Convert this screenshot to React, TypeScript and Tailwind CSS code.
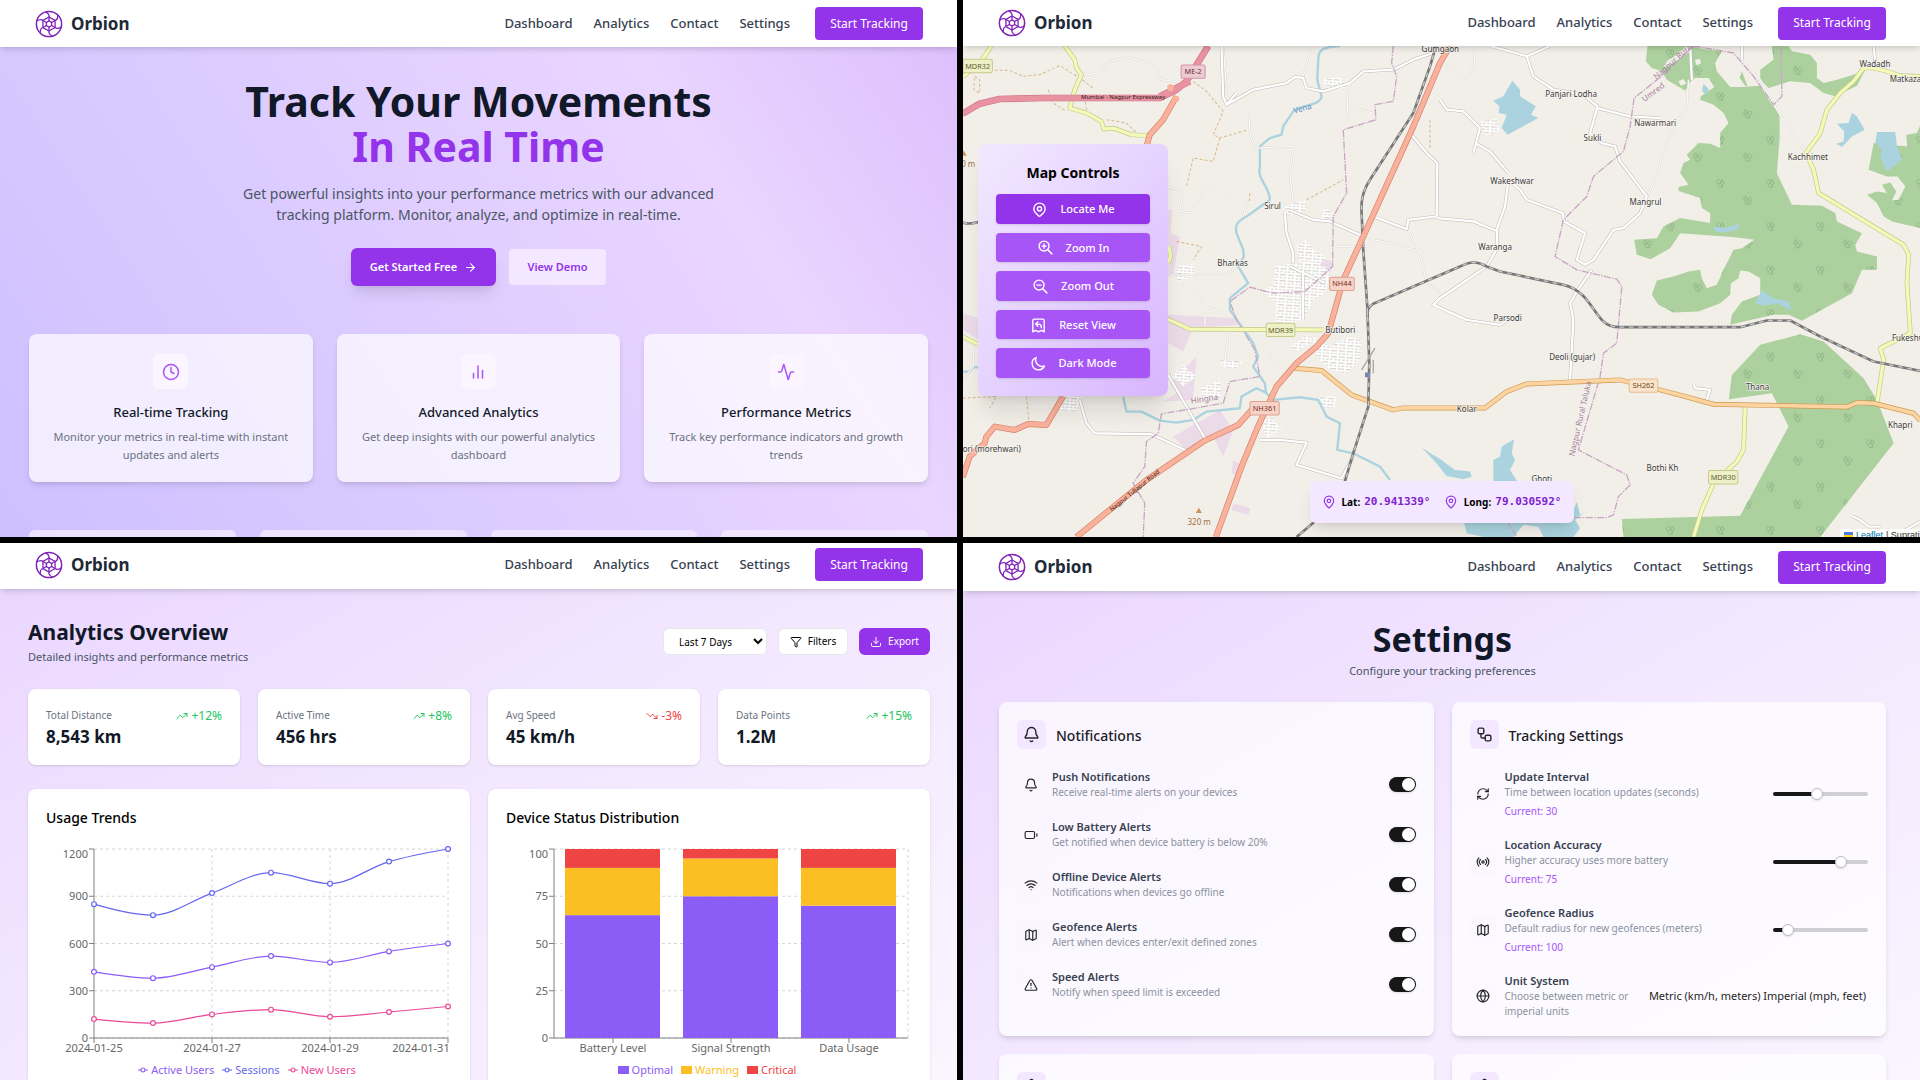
import React from "react";
import type { ReactNode } from "react";
import {
  Activity,
  ArrowRight,
  Battery,
  Bell,
  Clock,
  Download,
  Filter,
  Globe,
  Map as MapIcon,
  MapPin,
  Radio,
  RefreshCw,
  Settings as Gear,
  Shield,
  TrendingDown,
  TrendingUp,
  TriangleAlert,
  Wifi,
  Workflow,
} from "lucide-react";
import { FiBarChart2 } from "react-icons/fi";
import {
  HiOutlineLocationMarker,
  HiOutlineMoon,
  HiOutlineReceiptRefund,
  HiOutlineZoomIn,
  HiOutlineZoomOut,
} from "react-icons/hi";

/* ---------- Shared header ---------- */

function polar(r: number, deg: number): string {
  const a = (deg * Math.PI) / 180;
  return `${(14 + r * Math.cos(a)).toFixed(2)} ${(14 + r * Math.sin(a)).toFixed(2)}`;
}

function Logo() {
  const angles = [0, 60, 120, 180, 240, 300];
  const hex = (r: number) => "M" + angles.map((a) => polar(r, a + 30)).join("L") + "Z";
  return (
    <svg viewBox="0 0 28 28" className="size-[28px]" fill="none" stroke="#7e22b8" aria-hidden="true">
      <circle cx="14" cy="14" r="12.6" strokeWidth="1.5" />
      <path d={hex(7)} strokeWidth="1.3" />
      <path d={hex(3)} strokeWidth="1.3" />
      {angles.map((a) => (
        <g key={a} strokeWidth="1.3">
          <path d={`M${polar(3, a + 30)}L${polar(7, a + 30)}`} />
          <path d={`M${polar(7, a + 30)}Q${polar(10, a + 34)} ${polar(12.6, a + 14)}`} />
        </g>
      ))}
    </svg>
  );
}

function Header({ className }: { className: string }) {
  return (
    <header
      className={`relative z-10 flex shrink-0 items-center justify-between bg-white pl-[35px] pr-[34px] shadow-md ${className}`}
    >
      <a href="#home" className="flex items-center gap-2 text-[17px] font-bold text-[#1f2937]">
        <Logo />
        Orbion
      </a>
      <nav className="flex items-center gap-[21px] text-[13px] font-medium text-[#374151]">
        <a href="#dashboard">Dashboard</a>
        <a href="#analytics">Analytics</a>
        <a href="#contact">Contact</a>
        <a href="#settings">Settings</a>
        <button type="button" className="ml-1 h-[33px] w-[108px] rounded bg-[#9333ea] text-[12px] font-normal text-white">
          Start Tracking
        </button>
      </nav>
    </header>
  );
}

/* ---------- Landing ---------- */

const features: { icon: ReactNode; title: string; text: string }[] = [
  { icon: <Clock size={18} />, title: "Real-time Tracking", text: "Monitor your metrics in real-time with instant updates and alerts" },
  { icon: <FiBarChart2 size={18} />, title: "Advanced Analytics", text: "Get deep insights with our powerful analytics dashboard" },
  { icon: <Activity size={18} />, title: "Performance Metrics", text: "Track key performance indicators and growth trends" },
];

function Landing() {
  return (
    <section className="flex min-h-0 flex-col overflow-hidden bg-[linear-gradient(57deg,#cdc0ff_0%,#dccbff_38%,#e9d5ff_73%,#dcbdfd_100%)]">
      <Header className="h-[47px]" />
      <div className="flex flex-col items-center px-[29px] pt-8 text-center">
        <h1 className="text-[41px] font-bold leading-[45px] text-[#111827]">
          Track Your Movements
          <span className="block text-[#9333ea]">In Real Time</span>
        </h1>
        <p className="mt-[14px] max-w-[490px] text-[14px] leading-[21px] text-[#4b5563]">
          Get powerful insights into your performance metrics with our advanced tracking platform. Monitor, analyze, and
          optimize in real-time.
        </p>
        <div className="mt-[23px] flex items-center gap-[13px] text-[11px] font-semibold">
          <button
            type="button"
            className="flex h-[38px] w-[145px] items-center justify-center gap-[7px] rounded-md bg-[#9333ea] text-white shadow-lg"
          >
            Get Started Free
            <ArrowRight size={13} />
          </button>
          <button type="button" className="h-[36px] w-[97px] rounded bg-[#f3e8ff] text-[#9333ea]">
            View Demo
          </button>
        </div>
        <div className="mt-[48px] grid w-full grid-cols-3 gap-6">
          {features.map((f) => (
            <article key={f.title} className="flex flex-col items-center rounded-lg bg-white/70 px-4 pb-[18px] pt-5 shadow-md">
              <div className="flex size-[35px] items-center justify-center rounded-md bg-[#faf5ff] text-[#a855f7]">{f.icon}</div>
              <h2 className="mt-[14px] text-[13px] font-medium leading-[18px] text-[#111827]">{f.title}</h2>
              <p className="mt-[7px] text-[11px] leading-[18px] text-[#6b7280]">{f.text}</p>
            </article>
          ))}
        </div>
        <div className="mt-[48px] grid w-full grid-cols-4 gap-6">
          {[0, 1, 2, 3].map((i) => (
            <div key={i} className="h-24 rounded-md bg-[#f3e8ff]/80" />
          ))}
        </div>
      </div>
    </section>
  );
}

/* ---------- Map ---------- */

const forests = [
  "M2062 139 2057 185 2075 205 2105 215 2120 240 2175 273 2192 245 2205 235 2245 235 2262 262 2222 290 2220 300 2260 315 2290 340 2305 370 2280 400 2280 445 2250 432 2215 430 2180 465 2190 480 2170 490 2160 520 2185 555 2155 562 2155 574 2220 595 2225 625 2250 640 2250 670 2160 655 2110 680 2090 715 2022 720 2030 765 2072 778 2130 745 2160 700 2325 712 2382 720 2345 745 2320 750 2290 810 2270 855 2240 865 2225 835 2220 810 2185 815 2140 830 2090 842 2075 885 2095 915 2140 938 2215 935 2280 910 2310 885 2312 850 2335 835 2340 812 2365 815 2400 835 2400 885 2345 905 2315 945 2310 975 2440 945 2485 945 2525 963 2675 880 2705 810 2750 810 2750 770 2690 755 2685 735 2705 700 2630 665 2625 640 2585 618 2495 615 2450 520 2458 420 2458 345 2425 300 2400 258 2345 262 2310 262 2270 215 2265 190 2285 155 2230 148 2190 139Z",
  "M2435 139 2440 180 2400 210 2400 240 2425 265 2490 245 2550 250 2590 280 2625 290 2690 258 2715 210 2680 225 2630 240 2590 250 2570 235 2570 190 2550 165 2495 155 2485 139Z",
  "M2880 375 2870 400 2838 405 2840 440 2740 430 2725 510 2780 530 2812 530 2835 560 2815 600 2795 602 2808 575 2790 548 2765 555 2780 580 2750 575 2720 585 2750 610 2770 650 2795 665 2880 685Z",
  "M2345 215 2338 235 2355 258 2362 260Z",
  "M2520 1003 2400 1035 2315 1125 2306 1198 2435 1180 2485 1280 2340 1547 1985 1557 1990 1611 2580 1611 2800 1330 2750 1200 2710 1135 2590 1025Z",
];

const clearings = [
  "M2180 139 2150 165 2120 185 2110 205 2130 195 2160 175 2190 155Z",
  "M2205 180 2220 178 2222 192 2208 196Z",
  "M2155 245 2170 238 2178 252 2162 258Z",
];

const waters = [
  "M1657 243 1640 272 1630 290 1600 303 1618 320 1616 340 1640 345 1625 385 1643 405 1735 355 1713 345 1727 320 1680 290 1680 270Z",
  "M2230 253 2246 268 2238 283 2225 275Z",
  "M2675 340 2690 350 2713 390 2675 410 2645 442 2628 432 2650 425 2652 395 2630 372 2665 370Z",
  "M2750 397 2805 397 2810 440 2825 480 2780 515 2760 475 2765 450 2745 430Z",
  "M2385 910 2405 872 2440 895 2485 905 2493 932 2450 910 2410 918Z",
  "M2260 680 2300 685 2340 670 2330 690 2290 698 2265 694Z",
  "M1385 1343 1415 1362 1440 1377 1485 1410 1530 1415 1535 1430 1510 1438 1460 1428 1425 1385Z",
  "M1600 1380 1620 1370 1625 1340 1662 1318 1655 1360 1665 1380 1650 1410 1675 1450 1600 1450Z",
  "M1510 1560 1830 1560 1850 1505 1860 1545 1875 1535 1845 1560 1860 1585 1840 1611 1750 1611 1735 1580 1690 1575 1660 1611 1570 1611 1520 1600Z",
];

const zones = [
  "M625 945 830 955 840 975 700 985 670 1055 625 1030Z",
  "M630 1150 710 1070 700 1200 610 1205 650 1180Z",
  "M640 1310 780 1230 820 1290 790 1370 760 1310 680 1350Z",
  "M820 1380 845 1395 835 1430 815 1420Z",
  "M820 1510 872 1525 865 1545 815 1530Z",
  "M625 630 638 630 632 700 660 710 640 830 625 830Z",
  "M1078 775 1118 785 1112 815 1080 812Z",
  "M9 940 56 955 56 1020 9 990Z",
];

const minorRoads = [
  "M2 1150 40 1100 45 1020 M625 563 670 572 660 635 695 640 740 560 860 610 850 650",
  "M365 228 420 220 450 185 510 172 590 200 600 240 690 250",
  "M780 320 800 270 790 139 M867 335 870 400 885 445 1000 440 990 520 1000 610",
  "M1055 139 1030 230 M1165 250 1162 350 M1165 320 1240 340",
  "M630 1120 640 1060 M735 940 735 980 M630 825 800 825 830 800",
  "M700 870 740 920 790 940 M805 1000 795 1080 M925 1060 960 1100",
  "M1350 700 1360 730 1380 760 1400 850 1440 880 M1130 740 1230 740 1250 720 1400 760",
  "M2300 139 2400 240 2450 330 2495 400 2540 460 M1540 139 1545 190 1515 245 1450 190",
  "M2185 240 2180 320 2150 370 2110 450 2090 530 2060 590",
];

const whiteRoads = [
  "M360 1200 380 1270 405 1300 575 1303 680 1352",
  "M625 1125 735 1315",
  "M800 315 880 270 980 250 1005 232 1030 235 1040 265 1090 275 1170 250 1210 215 1300 210 1360 180 1420 160",
  "M785 139 790 290 800 315 830 280",
  "M985 630 1060 660 1110 665 1215 712 M975 640 980 700 1000 760 1000 790",
  "M1030 810 1030 960 M990 800 1095 850",
  "M1350 400 1400 460 1432 490 1430 650 1345 660 1340 688 1240 650",
  "M1430 655 1540 665 1613 695 M1645 540 1635 620 1610 690 1612 745 1580 800 1440 895 1420 915 1520 960 1620 975 1650 955",
  "M1440 300 1460 330 1510 335 1560 385 1540 460 M1545 430 1590 455 1645 520",
  "M1645 540 1680 570 1700 600 1808 640 1812 665 1875 700 1850 780 1875 795 1900 780 1960 690 1990 685 2040 640 2060 590 1980 485 1965 440 1925 430 1890 400 1912 320 1870 285 1780 270 1720 230 1700 170 1770 139",
  "M1912 325 2010 350 2100 355 M1590 139 1650 155 1700 170",
  "M2190 139 2195 240 M2345 139 2345 180 M2740 139 2745 190",
  "M1895 810 1850 875 1830 910 1840 960 1830 1140",
  "M900 1320 960 1320 1040 1328 1010 1395 1060 1410 1145 1435 1180 1370",
  "M2200 1150 2205 1165 2250 1170 2240 1200 M2675 1548 2700 1560 2725 1580 2760 1580 M2835 1590 2880 1565",
];

const yellowRoads = [
  "M95 139 60 190 9 232",
  "M315 139 345 180 350 205 365 225 345 270 330 325 380 340 425 365 432 388 460 385 515 405 570 408",
  "M600 950 640 965 690 988 1090 990",
  "M9 1010 56 1034",
  "M625 790 632 770 628 740",
  "M2880 230 2820 228 2780 215 2740 205 2710 205 2680 245 2640 280 2600 330 2580 400 2537 460 2560 510 2575 580 2830 735 2845 765 2840 850 2850 1000 2760 1045 2770 1080 2750 1210",
  "M2355 1218 2350 1350 2330 1385 2260 1450 2225 1530 2200 1611",
];

const orangeRoad =
  "M1005 1105 1085 1112 1175 1185 1300 1230 1330 1224 1575 1224 1640 1175 1700 1152 1980 1140 2120 1175 2260 1213 2660 1221 2690 1208 2740 1210 2860 1240 2880 1262";

const trunkRoads = [
  "M1470 139 1440 190 1360 380 1210 710 1150 840 1105 1000 1070 1040 1010 1090 950 1160 915 1235 890 1290 845 1400 805 1510 768 1611",
  "M940 1235 880 1225 835 1275 735 1322 560 1440 350 1611",
  "M650 290 610 360 570 405 560 440",
  "M9 1432 30 1370 75 1330 80 1310 105 1280 165 1290 205 1272 260 1275 310 1190",
];

const expressway = "M9 342 60 312 120 298 250 295 600 295 650 270 680 245 745 139 M600 290 690 245";

const rivers = [
  "M1140 139C1090 141 1075 150 1075 180L1072 240 1085 290C1080 320 1020 315 1000 335L970 380 965 405 930 415 900 440 900 500C890 540 930 560 930 600L860 650C830 665 825 680 830 700L850 750 852 770 835 800 865 850 810 895 810 930 880 1030 895 1070 880 1100 915 1150 918 1178 940 1200 1020 1192 1075 1200 1100 1250 1140 1270 1132 1350 1180 1360 1260 1400 1290 1440",
  "M918 1178 890 1165 845 1190 840 1225 740 1235 700 1260 650 1268 600 1262 545 1235 500 1235 490 1190",
  "M9 1115 30 1115 40 1102 56 1102",
];

const boundaries = [
  "M1300 139 1295 190 1310 230 1300 305 1245 315 1248 360 1150 390 1160 580 1120 650 1118 800 1035 875 940 880 870 862 810 905 830 960 885 1050 900 1130 810 1145 790 1210 605 1242 595 1300 560 1325 555 1400 520 1450 555 1510 550 1611",
  "M2200 139 2110 225 2022 295 2010 380 1990 455 1900 530 1880 590 1810 660 1785 770 1850 810 1970 838 1985 860 1970 1030 1930 1060 1920 1130 1855 1350 2000 1425 2010 1455 1975 1490 1960 1545 1940 1553 1840 1553",
  "M2200 139 2320 160 2380 230 2440 315 2465 290 2463 139 M1640 1560 1670 1611",
];

const tracks = [
  "M60 212 150 212 190 230 240 225 300 198 360 235 400 265 M265 270 280 310 320 335 M380 330 375 290",
  "M440 360 500 370 530 400 M700 245 740 275 790 335 760 405 780 415 865 390 M780 415 760 485 700 475 680 560",
  "M1040 600 1150 540 M870 580 868 610 M1410 360 1410 450 M45 230 60 240 60 280 42 270Z",
  "M650 725 725 740 700 780 M9 1195 110 1190 90 1225 M200 1190 208 1265",
];

const railways = [
  "M1428 139 1410 200 1360 340 1230 540C1205 580 1203 610 1205 640L1210 750 1222 920 1228 1090 1225 1220 1180 1360 1150 1460 1070 1560 1010 1611",
  "M1222 950C1222 930 1225 920 1240 912L1500 800C1530 785 1550 783 1580 800L1620 815 1810 855C1880 870 1900 940 1930 965 1940 975 1960 982 1980 982L2340 982 2420 962 2490 962 2580 1010 2740 1085 2880 1113",
  "M9 668C30 675 45 670 56 667",
];

const districts = [
  "M1000 790 1095 800 1110 830 1095 880 1060 900 1030 960 950 980 950 910 900 870 940 860 945 800Z",
  "M1060 1010 1110 1040 1170 1010 1205 1025 1200 1080 1160 1120 1110 1110 1070 1070Z",
  "M1010 735 1040 720 1060 750 1100 770 1075 800 1020 800Z",
  "M990 1040 1040 1005 1065 1025 1010 1055Z",
  "M640 1130 670 1095 710 1130 670 1160Z",
  "M650 800 700 790 705 825 650 850Z",
  "M975 620 1035 600 1040 630 985 650Z",
  "M1095 620 1115 640 1105 670 1085 660Z",
  "M900 1250 940 1255 965 1290 920 1315Z",
  "M1080 1190 1130 1190 1125 1225 1090 1225Z",
  "M1090 235 1145 235 1160 265 1100 272Z",
  "M1560 365 1610 358 1618 395 1575 408Z",
  "M780 1080 850 1085 830 1105 785 1100Z",
  "M720 1165 780 1140 785 1190 735 1195Z",
  "M300 1190 370 1190 345 1235 300 1230Z",
];

type Place = { t: string; x: number; y: number; start?: boolean };

const places: Place[] = [
  { t: "Gumgaon", x: 1441, y: 150 },
  { t: "Panjari Lodha", x: 1833, y: 283 },
  { t: "Sukli", x: 1897, y: 415 },
  { t: "Nawarmari", x: 2085, y: 371 },
  { t: "Wakeshwar", x: 1656, y: 544 },
  { t: "Mangrul", x: 2056, y: 607 },
  { t: "Waranga", x: 1605, y: 744 },
  { t: "Kachhimet", x: 2543, y: 472 },
  { t: "Wadadh", x: 2744, y: 195 },
  { t: "Matkazari", x: 2788, y: 240, start: true },
  { t: "Sirul", x: 938, y: 620 },
  { t: "Bharkas", x: 818, y: 792 },
  { t: "Butibori", x: 1141, y: 992 },
  { t: "Parsodi", x: 1643, y: 954 },
  { t: "Deoli (gujar)", x: 1836, y: 1072 },
  { t: "Kolar", x: 1520, y: 1229 },
  { t: "Thana", x: 2392, y: 1163 },
  { t: "Fukeshwar", x: 2795, y: 1016, start: true },
  { t: "Khapri", x: 2820, y: 1275 },
  { t: "Bothi Kh", x: 2107, y: 1406 },
  { t: "Ghoti", x: 1745, y: 1437 },
  { t: "ori (morehwari)", x: 9, y: 1348, start: true },
];

const shields = [
  { t: "MDR32", x: 54, y: 199, w: 88, bg: "#eef0c8", line: "#c6ca8a", ink: "#5e6230" },
  { t: "ME-2", x: 700, y: 216, w: 72, bg: "#eccbd3", line: "#d592a4", ink: "#6f2a3e" },
  { t: "MDR39", x: 962, y: 990, w: 86, bg: "#eef0c8", line: "#c6ca8a", ink: "#5e6230" },
  { t: "NH44", x: 1146, y: 852, w: 74, bg: "#f5d3c8", line: "#e0a08e", ink: "#7a2f20" },
  { t: "NH361", x: 914, y: 1225, w: 88, bg: "#f5d3c8", line: "#e0a08e", ink: "#7a2f20" },
  { t: "SH262", x: 2050, y: 1157, w: 86, bg: "#f9e3cb", line: "#e5bd8e", ink: "#6f4820" },
  { t: "MDR30", x: 2289, y: 1432, w: 88, bg: "#eef0c8", line: "#c6ca8a", ink: "#5e6230" },
];

function Strokes({ paths, color, width, dash }: { paths: string[]; color: string; width: number; dash?: string }) {
  return (
    <g fill="none" stroke={color} strokeWidth={width} strokeDasharray={dash} strokeLinejoin="round">
      {paths.map((d) => (
        <path key={d} d={d} />
      ))}
    </g>
  );
}

function Fills({ paths, fill }: { paths: string[]; fill: string }) {
  return (
    <g fill={fill}>
      {paths.map((d) => (
        <path key={d} d={d} />
      ))}
    </g>
  );
}

function MapCanvas() {
  return (
    <svg
      viewBox="9 139 2871 1472"
      preserveAspectRatio="xMidYMid slice"
      className="absolute inset-0 size-full"
      fontFamily='"Noto Sans", sans-serif'
      role="img"
      aria-label="Street map around Butibori"
    >
      <defs>
        <pattern id="trees" width="150" height="130" patternUnits="userSpaceOnUse">
          <g fill="none" stroke="#86ac80" strokeWidth="2.4">
            <path d="M24 40v-8m0 0a6 6 0 1 1 2 0M36 42v-8l-6-4 6-11 6 11-6 4M27 42h11" />
            <path d="M106 92v-8l-6-4 6-11 6 11-6 4M118 94v-8m0 0a6 6 0 1 1 2 0M107 94h12" />
          </g>
        </pattern>
        <pattern id="streets" width="24" height="18" patternUnits="userSpaceOnUse" patternTransform="rotate(4)">
          <rect width="24" height="18" fill="#d9d5d0" />
          <path d="M0 4H24M0 13H24M5 0V18M17 4V13" fill="none" stroke="#fff" strokeWidth="5" />
        </pattern>
      </defs>
      <rect x="9" y="139" width="2871" height="1472" fill="#f2efe9" />
      <Fills paths={zones} fill="#ebdbe8" />
      <Fills paths={forests} fill="#add19e" />
      <Fills paths={forests} fill="url(#trees)" />
      <Fills paths={clearings} fill="#f2efe9" />
      <Fills paths={waters} fill="#aad3df" />
      <Strokes paths={rivers} color="#aad3df" width={7} />
      <Strokes paths={tracks} color="#d9b98a" width={3} dash="9 6" />
      <Fills paths={districts} fill="url(#streets)" />
      <Strokes paths={minorRoads} color="#d3d0cc" width={6} />
      <Strokes paths={minorRoads} color="#fbfaf8" width={4} />
      <Strokes paths={whiteRoads} color="#bdb9b5" width={10} />
      <Strokes paths={whiteRoads} color="#ffffff" width={7} />
      <Strokes paths={boundaries} color="#c9a6c4" width={4} dash="22 4 4 4" />
      <Strokes paths={yellowRoads} color="#c3c98b" width={14} />
      <Strokes paths={yellowRoads} color="#f5f9b8" width={10} />
      <Strokes paths={[orangeRoad]} color="#cf9a52" width={15} />
      <Strokes paths={[orangeRoad]} color="#fcd4a1" width={11} />
      <Strokes paths={railways} color="#777777" width={8} />
      <Strokes paths={railways} color="#c9c9c9" width={4} dash="14 14" />
      <Strokes paths={trunkRoads} color="#d97f68" width={18} />
      <Strokes paths={trunkRoads} color="#f9b29c" width={14} />
      <Strokes paths={[expressway]} color="#d07488" width={20} />
      <Strokes paths={[expressway]} color="#e892a2" width={16} />
      <g fill="#f9b29c">
        <circle cx="632" cy="264" r="10" />
        <circle cx="648" cy="298" r="10" />
      </g>
      <path d="M1205 1110 1245 1045M1240 1080v40" stroke="#a8a6a4" strokeWidth="4" fill="none" />
      <rect x="1215" y="1118" width="14" height="14" fill="#7a82b8" />
      <g fill="#d08f55">
        <path d="M717 1523l9 16h-18z" />
        <path d="M12 452l9 16h-18z" />
      </g>
      {shields.map((s) => (
        <g key={s.t}>
          <rect x={s.x - s.w / 2} y={s.y - 20} width={s.w} height="40" rx="5" fill={s.bg} stroke={s.line} strokeWidth="3" />
          <text x={s.x} y={s.y + 8} textAnchor="middle" fontSize="22" fill={s.ink}>
            {s.t}
          </text>
        </g>
      ))}
      <g fontSize="24" fill="#3b3a38" stroke="#f7f5f1" strokeWidth="4" paintOrder="stroke" strokeLinejoin="round">
        {places.map((p) => (
          <text key={p.t} x={p.x} y={p.y + 8} textAnchor={p.start ? "start" : "middle"}>
            {p.t}
          </text>
        ))}
      </g>
      <g fontSize="24" textAnchor="middle">
        <g fill="#a57da3">
          <text transform="translate(735 1205) rotate(-9)">Hingna</text>
          <text transform="translate(2084 284) rotate(-38)">Umred</text>
          <text transform="translate(2145 190) rotate(-42)">Nagpur Rural</text>
          <text transform="translate(1868 1258) rotate(-77)">Nagpur Rural Taluka</text>
        </g>
        <g fill="#a07040">
          <text x="718" y="1574">320 m</text>
          <text x="12" y="503">320 m</text>
        </g>
        <text transform="translate(1030 334) rotate(-15)" fill="#5a94c4">
          Vena
        </text>
      </g>
      <g fontSize="18" textAnchor="middle" fill="#2c1712">
        <text x="490" y="298">Mumbai - Nagpur Expressway</text>
        <text transform="translate(528 1476) rotate(-39)">Nagpur Tuljapur Road</text>
      </g>
    </svg>
  );
}

function ControlButton({ icon, label, primary }: { icon: ReactNode; label: string; primary?: boolean }) {
  return (
    <button
      type="button"
      className={`flex items-center justify-center gap-3 rounded pt-px text-[11px] font-medium text-white shadow ${
        primary ? "bg-[#9333ea]" : "bg-[#a855f7]"
      }`}
    >
      {icon}
      {label}
    </button>
  );
}

function Coordinate({ label, value }: { label: string; value: string }) {
  return (
    <p className="flex items-center gap-1 text-[10px] font-bold text-black">
      <MapPin size={14} className="mr-0.5 text-[#9333ea]" />
      {label}
      <span className="font-['DejaVu_Sans_Mono',monospace] text-[11px] text-[#7e22ce]">{value}</span>
    </p>
  );
}

function MapView() {
  return (
    <section className="flex min-h-0 flex-col overflow-hidden bg-[#f2efe9]">
      <Header className="h-[46px]" />
      <div className="relative min-h-0 flex-1 overflow-hidden">
        <MapCanvas />
        <div className="absolute left-[15px] top-[98px] w-[190px] rounded-lg bg-[linear-gradient(to_bottom_right,#f3e8ff,#e5d3ff_50%,#d8b4fe)] px-[18px] pb-[18px] pt-[19px] shadow-xl">
          <h2 className="text-center text-[14px] font-bold leading-5 text-black">Map Controls</h2>
          <div className="mt-[11px] grid h-[184px] auto-rows-fr gap-[9px]">
            <ControlButton primary icon={<HiOutlineLocationMarker size={17} />} label="Locate Me" />
            <ControlButton icon={<HiOutlineZoomIn size={17} />} label="Zoom In" />
            <ControlButton icon={<HiOutlineZoomOut size={17} />} label="Zoom Out" />
            <ControlButton icon={<HiOutlineReceiptRefund size={17} />} label="Reset View" />
            <ControlButton icon={<HiOutlineMoon size={17} />} label="Dark Mode" />
          </div>
        </div>
        <div className="absolute bottom-[14px] left-1/2 flex h-[42px] w-[264px] -translate-x-1/2 items-center justify-between rounded-md bg-[#f3e8ff] px-3 shadow-lg">
          <Coordinate label="Lat:" value="20.941339°" />
          <Coordinate label="Long:" value="79.030592°" />
        </div>
        <p className="absolute -bottom-1 right-0 flex h-3 w-[80px] items-center gap-[3px] overflow-hidden whitespace-nowrap bg-white/80 pl-1 text-[9px] leading-3 text-[#333]">
          <svg viewBox="0 0 9 6" className="h-[6px] w-[9px] shrink-0" aria-hidden="true">
            <path fill="#4C7BE1" d="M0 0h9v3H0z" />
            <path fill="#FFD500" d="M0 3h9v3H0z" />
          </svg>
          <a href="#leaflet" className="font-['Liberation_Sans',sans-serif] text-[#0078a8] underline">
            Leaflet
          </a>
          <span className="font-['Liberation_Sans',sans-serif]">| Supratit</span>
        </p>
      </div>
    </section>
  );
}

/* ---------- Analytics ---------- */

const stats = [
  { label: "Total Distance", value: "8,543 km", change: "+12%", up: true },
  { label: "Active Time", value: "456 hrs", change: "+8%", up: true },
  { label: "Avg Speed", value: "45 km/h", change: "-3%", up: false },
  { label: "Data Points", value: "1.2M", change: "+15%", up: true },
];

const plot = { left: 48, right: 402, top: 8, bottom: 197 };
const lineSeries = [
  { name: "Active Users", color: "#8b5cf6", data: [420, 380, 450, 520, 480, 550, 600] },
  { name: "Sessions", color: "#6366f1", data: [850, 780, 920, 1050, 980, 1120, 1200] },
  { name: "New Users", color: "#ec4899", data: [120, 95, 150, 180, 135, 165, 200] },
];

const px = (i: number) => plot.left + ((plot.right - plot.left) * i) / 6;
const py = (v: number, max: number) => plot.bottom - ((plot.bottom - plot.top) * v) / max;

/* Monotone cubic interpolation through evenly spaced points. */
function monotonePath(data: number[]): string {
  const ys = data.map((v) => py(v, 1200));
  const h = px(1) - px(0);
  const slopes = ys.slice(1).map((y, i) => (y - ys[i]) / h);
  const tangents = ys.map((_, i) => {
    if (i === 0 || i === ys.length - 1) return 0;
    const a = slopes[i - 1];
    const b = slopes[i];
    if (a * b <= 0) return 0;
    return Math.sign(a) * Math.min(Math.abs(a), Math.abs(b), Math.abs(a + b) / 4) * 2;
  });
  tangents[0] = (3 * slopes[0] - tangents[1]) / 2;
  const n = ys.length - 1;
  tangents[n] = (3 * slopes[n - 1] - tangents[n - 1]) / 2;
  let d = `M${px(0)} ${ys[0]}`;
  for (let i = 0; i < n; i++) {
    d += `C${px(i) + h / 3} ${ys[i] + (tangents[i] * h) / 3} ${px(i + 1) - h / 3} ${ys[i + 1] - (tangents[i + 1] * h) / 3} ${px(i + 1)} ${ys[i + 1]}`;
  }
  return d;
}

function Axes({ ticks, xs, labels, anchors, grid }: { ticks: number[]; xs: number[]; labels: string[]; anchors: number[]; grid: number[] }) {
  const max = ticks[ticks.length - 1];
  return (
    <>
      <g stroke="#d6d6d6" strokeDasharray="3 3">
        {ticks.map((t) => (
          <path key={t} d={`M${plot.left} ${py(t, max)}H${plot.right}`} />
        ))}
        {grid.map((x) => (
          <path key={x} d={`M${x} ${plot.top}V${plot.bottom}`} />
        ))}
      </g>
      <g stroke="#808080">
        <path d={`M${plot.left} ${plot.top}V${plot.bottom}H${plot.right}`} fill="none" />
        {ticks.map((t) => (
          <path key={t} d={`M${plot.left - 5} ${py(t, max)}H${plot.left}`} />
        ))}
        {xs.map((x) => (
          <path key={x} d={`M${x} ${plot.bottom}v5`} />
        ))}
      </g>
      <g fill="#666" fontSize="11">
        {ticks.map((t) => (
          <text key={t} x={plot.left - 6} y={py(t, max) + (t === max ? 9 : 4)} textAnchor="end">
            {t}
          </text>
        ))}
        {labels.map((l, i) => (
          <text key={l} x={anchors[i]} y={plot.bottom + 14} textAnchor="middle">
            {l}
          </text>
        ))}
      </g>
    </>
  );
}

function LineChart() {
  return (
    <svg viewBox="0 0 406 216" className="w-full" role="img" aria-label="Usage trends by day">
      <Axes
        ticks={[0, 300, 600, 900, 1200]}
        xs={[0, 2, 4, 6].map(px)}
        grid={[2, 4, 6].map(px)}
        labels={["2024-01-25", "2024-01-27", "2024-01-29", "2024-01-31"]}
        anchors={[px(0), px(2), px(4), 375]}
      />
      {lineSeries.map((s) => (
        <g key={s.name} stroke={s.color}>
          <path d={monotonePath(s.data)} fill="none" strokeWidth="1.2" />
          {s.data.map((v, i) => (
            <circle key={i} cx={px(i)} cy={py(v, 1200)} r="2.4" fill="#fff" strokeWidth="1.2" />
          ))}
        </g>
      ))}
    </svg>
  );
}

const bars = [
  { name: "Battery Level", optimal: 65, warning: 25, critical: 10 },
  { name: "Signal Strength", optimal: 75, warning: 20, critical: 5 },
  { name: "Data Usage", optimal: 70, warning: 20, critical: 10 },
];

function BarChart() {
  const centers = [107, 225, 343];
  return (
    <svg viewBox="0 0 406 216" className="w-full" role="img" aria-label="Device status distribution">
      <Axes ticks={[0, 25, 50, 75, 100]} xs={centers} grid={[plot.right]} labels={bars.map((b) => b.name)} anchors={centers} />
      {bars.map((b, i) => {
        const x = centers[i] - 48;
        const a = py(b.optimal, 100);
        const w = py(b.optimal + b.warning, 100);
        return (
          <g key={b.name}>
            <rect x={x} y={a} width="95" height={plot.bottom - a} fill="#8b5cf6" />
            <rect x={x} y={w} width="95" height={a - w} fill="#fbbf24" />
            <rect x={x} y={plot.top} width="95" height={w - plot.top} fill="#ef4444" />
          </g>
        );
      })}
    </svg>
  );
}

function ChartCard({ title, chart, legend }: { title: string; chart: ReactNode; legend: ReactNode }) {
  return (
    <article className="rounded-lg bg-white px-[18px] pb-6 pt-[18px] shadow-sm">
      <h2 className="text-[14px] font-medium leading-[22px] text-black">{title}</h2>
      <div className="mt-3">{chart}</div>
      <div className="mt-[5px] flex justify-center gap-2 pr-1 text-[11px] leading-4">{legend}</div>
    </article>
  );
}

function Analytics() {
  return (
    <section className="flex min-h-0 flex-col overflow-hidden bg-[linear-gradient(to_bottom_right,#e9d5ff,#f3e8ff_50%,#faf5ff)]">
      <Header className="h-[46px] pb-[3px]" />
      <div className="pl-[28px] pr-[27px] pt-[29px]">
        <div className="flex items-center justify-between">
          <div>
            <h1 className="text-[21px] font-bold leading-7 text-[#111827]">Analytics Overview</h1>
            <p className="mt-[3px] text-[11px] leading-4 text-[#4b5563]">Detailed insights and performance metrics</p>
          </div>
          <div className="flex items-center gap-[11px] text-[10px]">
            <select
              aria-label="Date range"
              className="h-[27px] w-[104px] rounded-md border border-[#e5e7eb] bg-white pl-[11px] text-black"
              defaultValue="7"
            >
              <option value="7">Last 7 Days</option>
              <option value="30">Last 30 Days</option>
            </select>
            <button
              type="button"
              className="flex h-[27px] w-[70px] items-center justify-center gap-[6px] rounded-md border border-[#e5e7eb] bg-white text-black"
            >
              <Filter size={12} />
              Filters
            </button>
            <button
              type="button"
              className="flex h-[27px] w-[71px] items-center justify-center gap-[6px] rounded-md bg-[#9333ea] text-white"
            >
              <Download size={12} />
              Export
            </button>
          </div>
        </div>
        <div className="mt-6 grid grid-cols-4 gap-[18px]">
          {stats.map((s) => (
            <article key={s.label} className="flex h-[76px] items-start justify-between rounded-lg bg-white px-[18px] pt-[18px] shadow-sm">
              <div>
                <p className="text-[10px] leading-4 text-[#6b7280]">{s.label}</p>
                <p className="mt-[2px] text-[17px] font-bold leading-6 text-[#111827]">{s.value}</p>
              </div>
              <p className={`flex items-center gap-[3px] text-[12px] leading-[18px] ${s.up ? "text-[#22c55e]" : "text-[#ef4444]"}`}>
                {s.up ? <TrendingUp size={12} /> : <TrendingDown size={12} />}
                {s.change}
              </p>
            </article>
          ))}
        </div>
        <div className="mt-6 grid grid-cols-2 gap-[18px]">
          <ChartCard
            title="Usage Trends"
            chart={<LineChart />}
            legend={lineSeries.map((s) => (
              <span key={s.name} className="flex items-center gap-[3px]" style={{ color: s.color }}>
                <svg viewBox="0 0 10 10" className="size-[10px]" fill="none" stroke="currentColor" strokeWidth="1.2" aria-hidden="true">
                  <path d="M0 5h3M7 5h3" />
                  <circle cx="5" cy="5" r="2" />
                </svg>
                {s.name}
              </span>
            ))}
          />
          <ChartCard
            title="Device Status Distribution"
            chart={<BarChart />}
            legend={
              <>
                <span className="flex items-center gap-[3px] text-[#8b5cf6]">
                  <i className="h-2 w-[11px] bg-[#8b5cf6]" />
                  Optimal
                </span>
                <span className="flex items-center gap-[3px] text-[#fbbf24]">
                  <i className="h-2 w-[11px] bg-[#fbbf24]" />
                  Warning
                </span>
                <span className="flex items-center gap-[3px] text-[#ef4444]">
                  <i className="h-2 w-[11px] bg-[#ef4444]" />
                  Critical
                </span>
              </>
            }
          />
        </div>
      </div>
    </section>
  );
}

/* ---------- Settings ---------- */

const alerts = [
  { id: "push", icon: <Bell size={14} />, title: "Push Notifications", text: "Receive real-time alerts on your devices" },
  { id: "battery", icon: <Battery size={14} />, title: "Low Battery Alerts", text: "Get notified when device battery is below 20%" },
  { id: "offline", icon: <Wifi size={14} />, title: "Offline Device Alerts", text: "Notifications when devices go offline" },
  { id: "geofence", icon: <MapIcon size={14} />, title: "Geofence Alerts", text: "Alert when devices enter/exit defined zones" },
  { id: "speed", icon: <TriangleAlert size={14} />, title: "Speed Alerts", text: "Notify when speed limit is exceeded" },
];

const sliders = [
  { id: "interval", icon: <RefreshCw size={14} />, title: "Update Interval", text: "Time between location updates (seconds)", value: 30, min: 5, max: 60 },
  { id: "accuracy", icon: <Radio size={14} />, title: "Location Accuracy", text: "Higher accuracy uses more battery", value: 75, min: 0, max: 100 },
  { id: "radius", icon: <MapIcon size={14} />, title: "Geofence Radius", text: "Default radius for new geofences (meters)", value: 100, min: 50, max: 500 },
];

function CardTitle({ icon, children }: { icon: ReactNode; children?: ReactNode }) {
  return (
    <div className="flex items-center gap-[10px]">
      <span className="flex size-[29px] items-center justify-center rounded-md bg-[#f3e8ff] text-[#262626]">{icon}</span>
      <h2 className="pt-[3px] text-[14px] font-medium leading-5 text-[#1c1c1f]">{children}</h2>
    </div>
  );
}

function RowIcon({ children }: { children: ReactNode }) {
  return <span className="flex size-[27px] shrink-0 items-center justify-center rounded-md bg-[#faf5ff]/50 text-[#262626]">{children}</span>;
}

const cardClass = "rounded-lg bg-white/70 p-[18px] pb-[17px] shadow-md";

function SettingsPage() {
  return (
    <section className="flex min-h-0 flex-col overflow-hidden bg-[linear-gradient(to_bottom_right,#e9d5ff,#f3e8ff_50%,#faf5ff)]">
      <Header className="h-[48px]" />
      <div className="pl-[36px] pr-[34px] pt-[28px]">
        <h1 className="text-center text-[34px] font-bold leading-10 text-[#111827]">Settings</h1>
        <p className="mt-[4px] text-center text-[11px] leading-4 text-[#4b5563]">Configure your tracking preferences</p>
        <div className="mt-[23px] grid grid-cols-2 gap-[18px]">
          <article className={cardClass}>
            <CardTitle icon={<Bell size={17} />}>Notifications</CardTitle>
            <ul className="mt-5 flex flex-col gap-[19px]">
              {alerts.map((a) => (
                <li key={a.id} className="flex h-[31px] items-center">
                  <RowIcon>{a.icon}</RowIcon>
                  <label htmlFor={a.id} className="ml-2 flex-1">
                    <span className="block text-[11px] font-semibold leading-4 text-[#374151]">{a.title}</span>
                    <span className="block text-[10px] leading-[15px] text-[#8b92a0]">{a.text}</span>
                  </label>
                  <input
                    id={a.id}
                    type="checkbox"
                    role="switch"
                    defaultChecked
                    className="flex h-[15px] w-[27px] appearance-none items-center rounded-full bg-[#d1d5db] px-px shadow-sm before:size-[13px] before:rounded-full before:bg-white checked:justify-end checked:bg-[#171717]"
                  />
                </li>
              ))}
            </ul>
          </article>
          <article className={cardClass}>
            <CardTitle icon={<Workflow size={17} />}>Tracking Settings</CardTitle>
            <ul className="mt-5 flex flex-col gap-[18px]">
              {sliders.map((s) => {
                const fill = ((s.value - s.min) / (s.max - s.min)) * 100;
                return (
                  <li key={s.id} className="flex items-center">
                    <RowIcon>{s.icon}</RowIcon>
                    <label htmlFor={s.id} className="ml-2 flex-1">
                      <span className="block text-[11px] font-semibold leading-4 text-[#374151]">{s.title}</span>
                      <span className="block text-[10px] leading-[15px] text-[#8b92a0]">{s.text}</span>
                      <span className="mt-1 block text-[10px] leading-[15px] text-[#a855f7]">Current: {s.value}</span>
                    </label>
                    <input
                      id={s.id}
                      type="range"
                      min={s.min}
                      max={s.max}
                      defaultValue={s.value}
                      className="h-1 w-[95px] appearance-none rounded-full [&::-webkit-slider-thumb]:size-3 [&::-webkit-slider-thumb]:appearance-none [&::-webkit-slider-thumb]:rounded-full [&::-webkit-slider-thumb]:border [&::-webkit-slider-thumb]:border-[#bdbbc2] [&::-webkit-slider-thumb]:bg-white [&::-webkit-slider-thumb]:shadow-sm"
                      style={{ background: `linear-gradient(to right, #171717 ${fill}%, #d1cfd6 ${fill}%)` }}
                    />
                  </li>
                );
              })}
              <li className="flex items-center">
                <RowIcon>
                  <Globe size={14} />
                </RowIcon>
                <div className="ml-2 w-[130px]">
                  <p className="text-[11px] font-semibold leading-4 text-[#374151]">Unit System</p>
                  <p className="text-[10px] leading-[15px] text-[#8b92a0]">Choose between metric or imperial units</p>
                </div>
                <p className="ml-auto whitespace-nowrap pr-0.5 text-[11px] text-[#262626]">Metric (km/h, meters) Imperial (mph, feet)</p>
              </li>
            </ul>
          </article>
          <article className={cardClass}>
            <CardTitle icon={<Shield size={17} />} />
          </article>
          <article className={cardClass}>
            <CardTitle icon={<Gear size={17} />} />
          </article>
        </div>
      </div>
    </section>
  );
}

export default function App() {
  return (
    <main className="grid h-screen grid-cols-2 grid-rows-2 gap-[6px] overflow-hidden bg-black font-['Noto_Sans','Open_Sans',sans-serif]">
      <Landing />
      <MapView />
      <Analytics />
      <SettingsPage />
    </main>
  );
}
